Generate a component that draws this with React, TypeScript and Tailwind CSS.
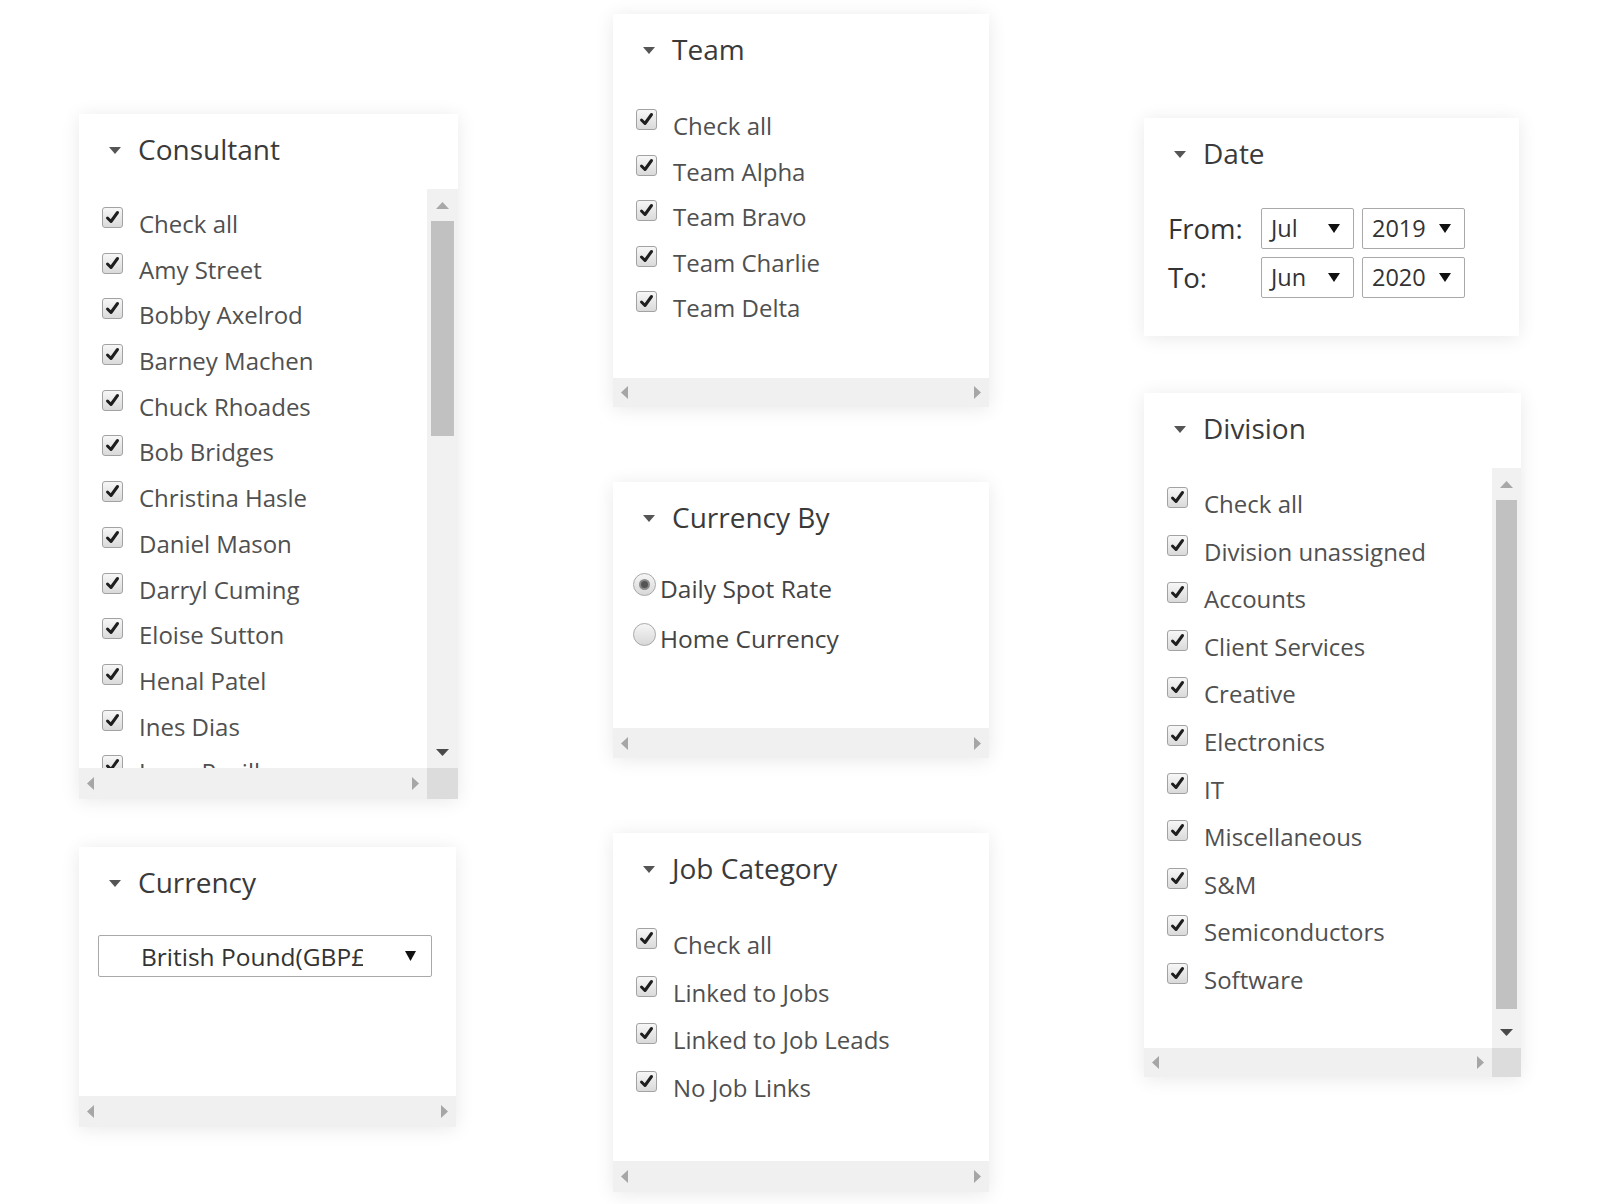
import React from "react";

const consultants = [
  "Check all",
  "Amy Street",
  "Bobby Axelrod",
  "Barney Machen",
  "Chuck Rhoades",
  "Bob Bridges",
  "Christina Hasle",
  "Daniel Mason",
  "Darryl Cuming",
  "Eloise Sutton",
  "Henal Patel",
  "Ines Dias",
  "Isaac Revill",
];

const teams = ["Check all", "Team Alpha", "Team Bravo", "Team Charlie", "Team Delta"];

const jobCategories = ["Check all", "Linked to Jobs", "Linked to Job Leads", "No Job Links"];

const divisions = [
  "Check all",
  "Division unassigned",
  "Accounts",
  "Client Services",
  "Creative",
  "Electronics",
  "IT",
  "Miscellaneous",
  "S&M",
  "Semiconductors",
  "Software",
];

const Caret = () => (
  <svg width="12" height="7" viewBox="0 0 12 7" className="shrink-0 mt-[2px]">
    <polygon points="0,0 12,0 6,7" fill="#555" />
  </svg>
);

const Tri = ({ dir, color }: { dir: "up" | "down" | "left" | "right"; color: string }) => {
  const pts = {
    up: "0,7 13,7 6.5,0",
    down: "0,0 13,0 6.5,7",
    left: "7,0 7,13 0,6.5",
    right: "0,0 0,13 7,6.5",
  }[dir];
  const vertical = dir === "up" || dir === "down";
  return (
    <svg width={vertical ? 13 : 7} height={vertical ? 7 : 13} viewBox={vertical ? "0 0 13 7" : "0 0 7 13"}>
      <polygon points={pts} fill={color} />
    </svg>
  );
};

const CheckBox = () => (
  <div className="w-[21px] h-[21px] shrink-0 rounded-[3px] border border-[#a2a2a2] bg-gradient-to-b from-[#f7f7f7] to-[#dadada] flex items-center justify-center">
    <svg width="15" height="15" viewBox="0 0 15 15">
      <path d="M2.5 8 L6 11.5 L12.5 2.5" fill="none" stroke="#1e1e1e" strokeWidth="3" strokeLinecap="round" strokeLinejoin="round" />
    </svg>
  </div>
);

const Radio = ({ on }: { on?: boolean }) => (
  <div className="w-[23px] h-[23px] shrink-0 rounded-full border border-[#a8a8a8] bg-gradient-to-b from-[#f6f6f6] to-[#d8d8d8] flex items-center justify-center">
    {on && <div className="w-[11px] h-[11px] rounded-full bg-[#555] border-2 border-[#8a8a8a]" />}
  </div>
);

const Header = ({ title }: { title: string }) => (
  <div className="h-[75px] shrink-0 pl-[30px] pt-[17px]">
    <div className="flex items-center gap-[17px] h-[37px]">
      <Caret />
      <span className="text-[28px] leading-[37px] font-medium text-[#3a3a3a]">{title}</span>
    </div>
  </div>
);

const HBar = ({ h, corner }: { h: string; corner?: string }) => (
  <div className={`flex shrink-0 ${h}`}>
    <div className="flex-1 flex items-center justify-between bg-[#f0f0f0] px-[8px]">
      <Tri dir="left" color="#a6a6a6" />
      <Tri dir="right" color="#a6a6a6" />
    </div>
    {corner && <div className={`bg-[#dcdcdc] ${corner}`} />}
  </div>
);

const VScroll = ({ w, thumb }: { w: string; thumb: string }) => (
  <div className={`flex flex-col shrink-0 bg-[#f1f1f1] ${w}`}>
    <div className="h-[32px] flex items-center justify-center">
      <Tri dir="up" color="#a8a8a8" />
    </div>
    <div className="flex-1 px-[4px]">
      <div className={`bg-[#c1c1c1] ${thumb}`} />
    </div>
    <div className="h-[32px] flex items-center justify-center">
      <Tri dir="down" color="#4a4a4a" />
    </div>
  </div>
);

const CheckList = ({ items, row, pt }: { items: string[]; row: string; pt: string }) => (
  <div className={`flex flex-col pl-[23px] ${pt}`}>
    {items.map((item) => (
      <div key={item} className={`flex items-start gap-[16px] shrink-0 ${row}`}>
        <CheckBox />
        <span className="mt-[1px] text-[24px] leading-[31px] text-[#505050] whitespace-nowrap">{item}</span>
      </div>
    ))}
  </div>
);

const Card = ({ title, className, children }: { title: string; className: string; children: React.ReactNode }) => (
  <div className={`flex flex-col bg-white shadow-[0_2px_18px_rgba(0,0,0,0.09)] ${className}`}>
    <Header title={title} />
    {children}
  </div>
);

const DateSelect = ({ value, w }: { value: string; w: string }) => (
  <div className={`flex items-center justify-between h-[41px] border border-[#a9a9a9] rounded-[2px] pl-[9px] pr-[13px] bg-white ${w}`}>
    <span className="text-[23.5px] leading-[31px] text-[#333]">{value}</span>
    <svg width="12" height="9" viewBox="0 0 12 9">
      <polygon points="0,0 12,0 6,9" fill="#111" />
    </svg>
  </div>
);

export default function App() {
  return (
    <div className="w-[1600px] h-[1204px] bg-white flex items-start pl-[79px] overflow-hidden font-['Open_Sans',sans-serif]">
      {/* left column */}
      <div className="flex flex-col pt-[114px] w-[379px]">
        <Card title="Consultant" className="h-[685px]">
          <div className="flex flex-1 min-h-0">
            <div className="flex-1 overflow-hidden">
              <CheckList items={consultants} row="h-[45.7px]" pt="pt-[18px]" />
            </div>
            <VScroll w="w-[31px]" thumb="h-[215px]" />
          </div>
          <HBar h="h-[31px]" corner="w-[31px]" />
        </Card>

        <Card title="Currency" className="h-[280px] w-[377px] mt-[48px]">
          <div className="flex-1 pl-[19px] pt-[13px]">
            <div className="flex items-center justify-between w-[334px] h-[42px] border border-[#a9a9a9] rounded-[2px] pl-[42px] pr-[15px]">
              <span className="w-[222px] overflow-hidden whitespace-nowrap text-[24.5px] leading-[31px] text-[#333]">
                British Pound(GBP£)
              </span>
              <svg width="11" height="10" viewBox="0 0 11 10">
                <polygon points="0,0 11,0 5.5,10" fill="#111" />
              </svg>
            </div>
          </div>
          <HBar h="h-[31px]" />
        </Card>
      </div>

      {/* middle column */}
      <div className="flex flex-col pt-[14px] w-[376px] ml-[155px]">
        <Card title="Team" className="h-[393px]">
          <div className="flex-1 overflow-hidden">
            <CheckList items={teams} row="h-[45.5px]" pt="pt-[20px]" />
          </div>
          <HBar h="h-[29px]" />
        </Card>

        <Card title="Currency By" className="h-[276px] mt-[75px]">
          <div className="flex-1 flex flex-col pl-[20px] pt-[16px]">
            {[
              { label: "Daily Spot Rate", on: true },
              { label: "Home Currency", on: false },
            ].map((r) => (
              <div key={r.label} className="flex items-start gap-[4px] h-[50px]">
                <Radio on={r.on} />
                <span className="text-[24.5px] leading-[31px] text-[#444] whitespace-nowrap">{r.label}</span>
              </div>
            ))}
          </div>
          <HBar h="h-[30px]" />
        </Card>

        <Card title="Job Category" className="h-[359px] mt-[75px]">
          <div className="flex-1 overflow-hidden">
            <CheckList items={jobCategories} row="h-[47.7px]" pt="pt-[20px]" />
          </div>
          <HBar h="h-[31px]" />
        </Card>
      </div>

      {/* right column */}
      <div className="flex flex-col pt-[118px] w-[377px] ml-[155px]">
        <Card title="Date" className="h-[218px] w-[375px]">
          <div className="flex flex-col gap-[8px] pl-[24px] pt-[15px]">
            {[
              { label: "From:", m: "Jul", y: "2019" },
              { label: "To:", m: "Jun", y: "2020" },
            ].map((r) => (
              <div key={r.label} className="flex items-center">
                <span className="w-[93px] text-[27.5px] leading-[35px] text-[#333]">{r.label}</span>
                <DateSelect value={r.m} w="w-[93px]" />
                <div className="w-[8px]" />
                <DateSelect value={r.y} w="w-[103px]" />
              </div>
            ))}
          </div>
        </Card>

        <Card title="Division" className="h-[684px] mt-[57px]">
          <div className="flex flex-1 min-h-0">
            <div className="flex-1 overflow-hidden">
              <CheckList items={divisions} row="h-[47.6px]" pt="pt-[19px]" />
            </div>
            <VScroll w="w-[29px]" thumb="h-[509px]" />
          </div>
          <HBar h="h-[29px]" corner="w-[29px]" />
        </Card>
      </div>
    </div>
  );
}
